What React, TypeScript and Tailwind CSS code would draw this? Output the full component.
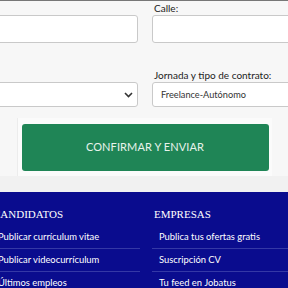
import React from "react";

const sans = { fontFamily: 'Lato, "Noto Sans", sans-serif' };
const serif = { fontFamily: '"Liberation Serif", "DejaVu Serif", serif' };

export default function App() {
  return (
    <div className="w-[288px] h-[288px] overflow-hidden bg-[#f7f7f7]" style={sans}>
      <div className="border-t border-[#777777] h-[176px] flex flex-col">
        <div className="flex gap-[14px] ml-[-120px]">
          <div className="w-[258px] shrink-0 flex flex-col">
            <div className="h-[14px]" />
            <div className="h-[28px] bg-white border border-[#c9c9c9] rounded-[3px]" />
            <div className="h-[39px]" />
            <div className="h-[25px] bg-white border border-[#c9c9c9] rounded-[3px] flex items-center justify-end pr-[4px]">
              <svg width="9" height="6" viewBox="0 0 9 6">
                <path d="M1 1 L4.5 4.5 L8 1" fill="none" stroke="#333" strokeWidth="1.6" />
              </svg>
            </div>
          </div>
          <div className="w-[258px] shrink-0 flex flex-col">
            <div className="h-[14px] text-[10px] leading-[14px] text-[#222] pl-[2px]">Calle:</div>
            <div className="h-[28px] bg-white border border-[#c9c9c9] rounded-[3px]" />
            <div className="h-[25px]" />
            <div className="h-[14px] text-[10px] leading-[14px] text-[#222] pl-[2px]">Jornada y tipo de contrato:</div>
            <div className="h-[25px] bg-white border border-[#c9c9c9] rounded-[3px] flex items-center pl-[8px] text-[9.2px] text-[#333]">
              Freelance-Autónomo
            </div>
          </div>
        </div>
        <div className="mt-[11px] ml-[17px] w-[255px] h-[58px] bg-[#fbfbfb] border-l border-[#ececec] flex items-center justify-center">
          <button className="w-[247px] h-[47px] bg-[#1f8556] rounded-[3px] text-[#e8f3ec] text-[11px] tracking-[0.1px]">
            CONFIRMAR Y ENVIAR
          </button>
        </div>
      </div>
      <div className="h-[16px] bg-[#f1f1f1]" />
      <div className="h-[96px] bg-[#0a0c8e] flex gap-[12px] ml-[-9px] text-white">
        <div className="w-[149px] shrink-0 flex flex-col">
          <div className="mt-[15px] h-[14px] pl-[2px] text-[11px] leading-[14px]" style={serif}>CANDIDATOS</div>
          <div className="mt-[5px] h-[23px] pl-[7px] text-[9.4px] leading-[22px] border-b border-[#3438a6]">Publicar currículum vitae</div>
          <div className="h-[23px] pl-[7px] text-[9.4px] leading-[22px] border-b border-[#3438a6]">Publicar videocurrículum</div>
          <div className="h-[22px] pl-[7px] text-[9.4px] leading-[22px]">Últimos empleos</div>
        </div>
        <div className="w-[149px] shrink-0 flex flex-col">
          <div className="mt-[15px] h-[14px] pl-[2px] text-[11px] leading-[14px]" style={serif}>EMPRESAS</div>
          <div className="mt-[5px] h-[23px] pl-[7px] text-[9.4px] leading-[22px] border-b border-[#3438a6]">Publica tus ofertas gratis</div>
          <div className="h-[23px] pl-[7px] text-[9.4px] leading-[22px] border-b border-[#3438a6]">Suscripción CV</div>
          <div className="h-[22px] pl-[7px] text-[9.4px] leading-[22px]">Tu feed en Jobatus</div>
        </div>
      </div>
    </div>
  );
}
